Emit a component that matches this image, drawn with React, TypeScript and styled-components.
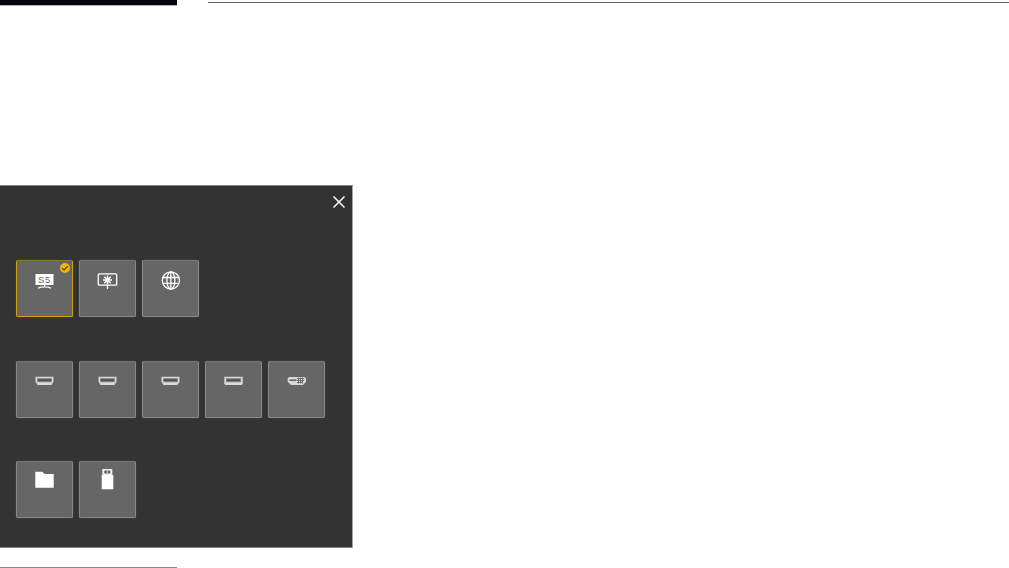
import React from 'react';
import styled, { createGlobalStyle } from 'styled-components';

const GlobalStyle = createGlobalStyle`
  html, body {
    margin: 0;
    padding: 0;
    background: #fff;
    overflow: hidden;
    font-family: "Liberation Sans", Arial, sans-serif;
  }
`;

const Page = styled.div`
  width: 1009px;
  height: 568px;
  display: flex;
  flex-direction: column;
`;

const TopRow = styled.div`
  display: flex;
  gap: 31px;
  height: 185px;
`;

const ActiveTab = styled.div`
  width: 177px;
  height: 5px;
  background: #05030f;
  border-bottom: 1px solid #b0b0b4;
`;

const HeaderRule = styled.div`
  flex: 1;
  height: 1px;
  margin-top: 2px;
  background: #666;
`;

const Panel = styled.section`
  position: relative;
  box-sizing: border-box;
  width: 353px;
  height: 363px;
  padding: 74px 0 0 16px;
  background: #333;
  border-top: 1px solid #808080;
  border-right: 1px solid #a6a6a6;
  border-bottom: 1px solid #808080;
  display: flex;
  flex-direction: column;
`;

const CloseButton = styled.button`
  position: absolute;
  top: 9px;
  right: 6px;
  width: 14px;
  height: 14px;
  padding: 0;
  border: 0;
  background: none;
  color: #fff;
  display: flex;
`;

const TileRow = styled.div<{ $gap?: number }>`
  display: flex;
  gap: 6px;
  margin-bottom: ${(p) => p.$gap ?? 44}px;
`;

const Tile = styled.div<{ $selected?: boolean }>`
  position: relative;
  box-sizing: border-box;
  width: 57px;
  height: 57px;
  padding-top: 6px;
  display: flex;
  justify-content: center;
  align-items: flex-start;
  background: #666;
  border: 1px solid ${(p) => (p.$selected ? '#c8a010' : '#888')};
  border-top-color: ${(p) => (p.$selected ? '#85793a' : '#757575')};
  border-radius: 2px;
  box-shadow: 0 0 1px ${(p) => (p.$selected ? 'rgba(200, 160, 16, 0.5)' : 'rgba(136, 136, 136, 0.8)')};
`;

const CheckBadge = styled.span`
  position: absolute;
  top: 2px;
  right: 2px;
  width: 10px;
  height: 10px;
  border-radius: 50%;
  background: #f2b705;
  display: flex;
  align-items: center;
  justify-content: center;
`;

// every tile glyph is drawn in the same 25x32 frame so the strokes line up
const TileIcon = styled.svg.attrs({ viewBox: '0 0 25 32' })`
  display: block;
  width: 25px;
  height: 32px;
`;

const HdmiIcon = () => (
  <TileIcon>
    <path d="M3.500 8.700h18v5l-2 3.300H5.500l-2-3.300z" fill="#d8d8d8" />
    <rect x="5.200" y="10.200" width="14.600" height="4" fill="#7c7c7c" />
    <rect x="6.200" y="11.500" width="12.600" height="1.200" fill="#3c3c3c" />
  </TileIcon>
);

const HdmiWideIcon = () => (
  <TileIcon>
    <path d="M3.300 8.700h18.400v7.300l-1 1H4.300l-1-1z" fill="#d8d8d8" />
    <rect x="5" y="10.200" width="15" height="4" fill="#7c7c7c" />
    <rect x="6" y="11.500" width="13" height="1.200" fill="#3c3c3c" />
  </TileIcon>
);

const DviIcon = () => (
  <TileIcon>
    <path d="M5 9h15.500l1.500 1.500v3.200L19 17H7l-3.300-3.300v-3.200z" fill="#d8d8d8" />
    <rect x="5.500" y="11.500" width="7" height="1.300" fill="#4a4a4a" />
    <path d="M13 10.500h7M13 12.500h7M13 14.500h6M14.500 9.500v6M16.500 9.500v6M18.500 9.500v6" stroke="#5a5a5a" strokeWidth=".8" />
  </TileIcon>
);

const TvIcon = () => (
  <TileIcon>
    <rect x="3.500" y="7" width="18" height="11" fill="#fff" />
    <path d="M12.500 18v1.500M6 21.300c3-1.800 10-1.800 13 0" fill="none" stroke="#fff" strokeWidth="1.300" />
    <text x="12.500" y="16" textAnchor="middle" fontSize="9.500" letterSpacing=".6" fontFamily="Liberation Sans" fill="#666">S5</text>
  </TileIcon>
);

const ProjectorIcon = () => (
  <TileIcon>
    <rect x="3.300" y="6.800" width="18.400" height="11.400" rx="1" fill="none" stroke="#fff" strokeWidth="1.300" />
    <path d="M12.500 8.500v9M8 13h9M9.300 9.800l6.400 6.400M15.700 9.800l-6.400 6.400" stroke="#fff" strokeWidth="1.400" />
    <path d="M12.500 18v4" stroke="#fff" strokeWidth="1.300" />
  </TileIcon>
);

const GlobeIcon = () => (
  <TileIcon fill="none" stroke="#fff" strokeWidth="1.300">
    <circle cx="12.900" cy="13.400" r="8.600" />
    <ellipse cx="12.900" cy="13.400" rx="4" ry="8.600" />
    <path d="M12.900 4.800v17.200M4.800 10.500h16.200M4.800 16.300h16.200" />
  </TileIcon>
);

const FolderIcon = () => (
  <TileIcon>
    <path d="M3.300 3.700h7l2.400 2.300h9v13.700H3.300z" fill="#fff" />
  </TileIcon>
);

const UsbIcon = () => (
  <TileIcon>
    <rect x="6.700" y="7" width="11.600" height="14.300" fill="#fff" />
    <rect x="7.300" y="1" width="10" height="6" fill="#eee" />
    <rect x="9.300" y="2.500" width="6" height="3" rx="1" fill="#5a5a5a" />
    <rect x="11.800" y="2.500" width="1" height="3" fill="#eee" />
  </TileIcon>
);

const BottomRule = styled.div`
  width: 177px;
  height: 1px;
  margin-top: 19px;
  background: #8c8c90;
`;

export default function App() {
  return (
    <Page>
      <GlobalStyle />
      <TopRow>
        <ActiveTab />
        <HeaderRule />
      </TopRow>
      <Panel>
        <CloseButton aria-label="Close">
          <svg width="14" height="14" viewBox="0 0 14 14" stroke="currentColor" strokeWidth="1.500">
            <path d="M1.500 1.500l11 11M12.500 1.500l-11 11" />
          </svg>
        </CloseButton>
        <TileRow>
          <Tile $selected>
            <TvIcon />
            <CheckBadge>
              <svg width="8" height="8" viewBox="0 0 8 8" fill="none" stroke="#4a3c00" strokeWidth="1.200">
                <path d="M1.300 4.200l1.900 1.800 3.500-3.800" />
              </svg>
            </CheckBadge>
          </Tile>
          <Tile><ProjectorIcon /></Tile>
          <Tile><GlobeIcon /></Tile>
        </TileRow>
        <TileRow $gap={43}>
          <Tile><HdmiIcon /></Tile>
          <Tile><HdmiIcon /></Tile>
          <Tile><HdmiIcon /></Tile>
          <Tile><HdmiWideIcon /></Tile>
          <Tile><DviIcon /></Tile>
        </TileRow>
        <TileRow $gap={0}>
          <Tile><FolderIcon /></Tile>
          <Tile><UsbIcon /></Tile>
        </TileRow>
      </Panel>
      <BottomRule />
    </Page>
  );
}
